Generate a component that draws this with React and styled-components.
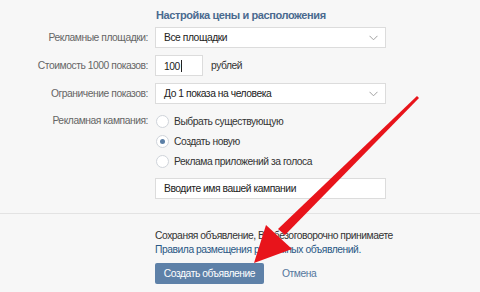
import React from "react";
import styled, { createGlobalStyle } from "styled-components";

const Global = createGlobalStyle`
  html, body {
    margin: 0;
    padding: 0;
    background: #f7f7f7;
  }
  body {
    font-family: "Liberation Sans", Arial, sans-serif;
    font-size: 10.3px;
    letter-spacing: -0.45px;
    color: #222;
  }
`;

const Page = styled.div`
  position: relative;
  width: 480px;
  height: 292px;
  overflow: hidden;
  background: #f7f7f7;
`;

const Form = styled.div`
  padding: 8px 0 0 0;
`;

const Title = styled.div`
  margin-left: 156px;
  font-size: 11px;
  font-weight: bold;
  letter-spacing: -0.4px;
  color: #4a6a8f;
  height: 19px;
  line-height: 15px;
`;

const Grid = styled.div`
  display: grid;
  grid-template-columns: 148px 231px;
  column-gap: 7px;
  row-gap: 7px;
  align-items: center;
`;

const Label = styled.div`
  text-align: right;
  color: #666;
  align-self: ${p => (p.$top ? "start" : "center")};
  line-height: ${p => (p.$top ? "20px" : "normal")};
`;

const Field = styled.div`
  height: 21px;
  box-sizing: border-box;
  background: #fff;
  border: 1px solid #dcdcdc;
  display: flex;
  align-items: center;
  justify-content: space-between;
  padding: 0 7px 0 8px;
  color: #222;
  white-space: nowrap;
  width: ${p => p.$w || "100%"};
`;

const Inline = styled.div`
  display: flex;
  align-items: center;
  gap: 8px;
  color: #333;
`;

const Caret = styled.span`
  display: inline-block;
  width: 1px;
  height: 12px;
  background: #222;
  margin-left: 1px;
  vertical-align: -2px;
`;

const Radios = styled.div`
  display: flex;
  flex-direction: column;
`;

const RadioRow = styled.div`
  height: 20px;
  display: flex;
  align-items: center;
  gap: 5px;
  color: #333;
`;

const Circle = styled.span`
  width: 11px;
  height: 11px;
  border-radius: 50%;
  border: 1px solid #cfd4da;
  background: #fff;
  display: flex;
  align-items: center;
  justify-content: center;
  margin-left: 1px;
  &::after {
    content: "";
    width: 5px;
    height: 5px;
    border-radius: 50%;
    background: ${p => (p.$on ? "#5b7fa6" : "transparent")};
  }
`;

const Sep = styled.div`
  height: 1px;
  background: #e3e3e3;
  margin-top: 14px;
`;

const Footer = styled.div`
  padding: 15px 0 0 155px;
  line-height: 14px;
`;

const Note = styled.div`
  color: #333;
`;

const Rules = styled.div`
  color: #2a5885;
`;

const Actions = styled.div`
  display: flex;
  align-items: center;
  gap: 18px;
  margin-top: 6px;
`;

const Button = styled.div`
  width: 109px;
  height: 21px;
  background: #5e81a8;
  color: #fff;
  border-radius: 2px;
  display: flex;
  align-items: center;
  justify-content: center;
  white-space: nowrap;
`;

const Cancel = styled.div`
  color: #55779d;
`;

const Arrow = styled.svg`
  position: absolute;
  left: 0;
  top: 0;
  pointer-events: none;
`;

const Chevron = () => (
  <svg width="9" height="6" viewBox="0 0 9 6">
    <path d="M0.5 0.8 L4.5 4.8 L8.5 0.8" fill="none" stroke="#a0a0a0" strokeWidth="1" />
  </svg>
);

export default function App() {
  return (
    <Page>
      <Global />
      <Form>
        <Title>Настройка цены и расположения</Title>
        <Grid>
          <Label>Рекламные площадки:</Label>
          <Field>
            Все площадки
            <Chevron />
          </Field>
          <Label>Стоимость 1000 показов:</Label>
          <Inline>
            <Field $w="48px">
              <span>
                100
                <Caret />
              </span>
            </Field>
            рублей
          </Inline>
          <Label>Ограничение показов:</Label>
          <Field>
            До 1 показа на человека
            <Chevron />
          </Field>
          <Label $top>Рекламная кампания:</Label>
          <Radios>
            <RadioRow>
              <Circle />
              Выбрать существующую
            </RadioRow>
            <RadioRow>
              <Circle $on />
              Создать новую
            </RadioRow>
            <RadioRow>
              <Circle />
              Реклама приложений за голоса
            </RadioRow>
          </Radios>
          <div />
          <Field>Вводите имя вашей кампании</Field>
        </Grid>
        <Sep />
        <Footer>
          <Note>Сохраняя объявление, Вы безоговорочно принимаете</Note>
          <Rules>Правила размещения рекламных объявлений.</Rules>
          <Actions>
            <Button>Создать объявление</Button>
            <Cancel>Отмена</Cancel>
          </Actions>
        </Footer>
      </Form>
      <Arrow width="480" height="292" viewBox="0 0 480 292">
        <polygon points="417,96 419,98 285,235 278,229" fill="#e8141b" />
        <polygon points="254,263 266,225 292,249" fill="#e8141b" />
      </Arrow>
    </Page>
  );
}
